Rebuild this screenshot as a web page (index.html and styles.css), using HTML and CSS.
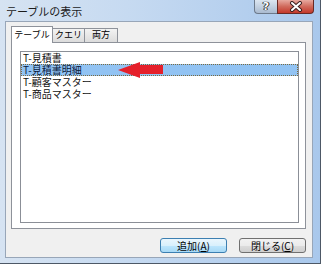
FILE: index.html
```html
<!DOCTYPE html>
<html lang="ja">
<head>
    <meta charset="UTF-8">
    <title>テーブルの表示</title>
    <link rel="stylesheet" href="styles.css">
</head>
<body>
    <div class="window">
        <div class="titlebar">
            <span class="title">テーブルの表示</span>
            <div class="caption">
                <span class="cap-btn help">?</span>
                <span class="cap-btn close">
                    <svg width="14" height="11" viewBox="0 0 14 11">
                        <path d="M3 2 L11 9 M11 2 L3 9" stroke="#3a2020" stroke-width="4" stroke-linecap="round"/>
                        <path d="M3 2 L11 9 M11 2 L3 9" stroke="#ffffff" stroke-width="2" stroke-linecap="round"/>
                    </svg>
                </span>
            </div>
        </div>
        <div class="client">
            <div class="tabs">
                <span class="tab active">テーブル</span>
                <span class="tab">クエリ</span>
                <span class="tab">両方</span>
            </div>
            <div class="panel">
                <ul class="list">
                    <li>T-見積書</li>
                    <li class="selected">T-見積書明細
                        <svg class="arrow" width="46" height="16" viewBox="0 0 46 16">
                            <polygon points="0,8 22,0 22,3 45,3 45,12 22,12 22,16" fill="#e5202b"/>
                        </svg>
                    </li>
                    <li>T-顧客マスター</li>
                    <li>T-商品マスター</li>
                </ul>
            </div>
            <div class="actions">
                <button class="btn default">追加(<u>A</u>)</button>
                <button class="btn">閉じる(<u>C</u>)</button>
            </div>
        </div>
    </div>
</body>
</html>
```

FILE: styles.css
```css
body {
    margin: 0;
    padding: 0;
    font-family: "Noto Sans CJK JP", "Liberation Sans", sans-serif;
    color: #000;
}
.window {
    width: 321px;
    height: 264px;
    box-sizing: border-box;
    padding: 0 7px 5px 5px;
    display: flex;
    flex-direction: column;
    background: linear-gradient(90deg, #d6e3f2 0%, #c6daf1 40%, #a9c8ec 100%);
    border-right: 1px solid #4d5866;
    border-bottom: 1px solid #4d5866;
}
.titlebar {
    height: 21px;
    display: flex;
    align-items: flex-start;
    flex-shrink: 0;
}
.title {
    font-size: 11px;
    line-height: 12px;
    margin: 5px 0 0 1px;
    color: #1b1b1b;
}
.caption {
    margin-left: auto;
    margin-right: -1px;
    display: flex;
}
.cap-btn {
    height: 14px;
    display: flex;
    align-items: center;
    justify-content: center;
    border: 1px solid #6d7a8b;
    border-top: none;
    box-sizing: border-box;
}
.help {
    width: 23px;
    border-radius: 0 0 0 4px;
    border-right: none;
    background: linear-gradient(#dce6f1, #aabbd0);
    color: #fff;
    font: bold 11px "DejaVu Sans", sans-serif;
    text-shadow: 0 0 1px #222, 0 0 1px #222, 1px 0 0 #333, -1px 0 0 #333;
}
.close {
    width: 37px;
    border-radius: 0 0 4px 0;
    background: linear-gradient(#e7a99f, #d06a5c 50%, #c4392b);
    border-color: #6a2a25;
}
.client {
    flex: 1;
    background: #f0f0f0;
    border: 1px solid #98a6b8;
    padding: 5px 6px 4px 5px;
    display: flex;
    flex-direction: column;
}
.tabs {
    display: flex;
    align-items: flex-end;
    height: 15px;
    position: relative;
    z-index: 1;
}
.tab {
    height: 14px;
    box-sizing: border-box;
    border: 1px solid #8e929a;
    border-bottom: none;
    border-left: none;
    background: linear-gradient(#f3f3f3, #dcdcdc);
    font-size: 9px;
    line-height: 12px;
    text-align: center;
    white-space: nowrap;
    padding: 0;
}
.tab:nth-child(2) {
    width: 32px;
}
.tab:nth-child(3) {
    width: 33px;
}
.tab.active {
    width: 42px;
    height: 17px;
    margin-bottom: -1px;
    background: #fff;
    border-left: 1px solid #8e929a;
    padding-top: 2px;
}
.panel {
    height: 187px;
    box-sizing: border-box;
    background: #fff;
    border: 1px solid #8e929a;
    padding: 8px 6px 5px 8px;
}
.list {
    list-style: none;
    margin: 0;
    padding: 0;
    height: 100%;
    box-sizing: border-box;
    border: 1px solid #8b8f97;
}
.list li {
    height: 12px;
    font-size: 10px;
    line-height: 12px;
    padding-left: 2px;
    color: #111;
    white-space: nowrap;
    position: relative;
}
.list li.selected {
    background: #92c3f3;
    outline: 1px dotted #7a6a40;
    outline-offset: -1px;
    color: #0a1a3c;
}
.arrow {
    position: absolute;
    left: 97px;
    top: -2px;
}
.actions {
    display: flex;
    justify-content: flex-end;
    gap: 12px;
    margin-top: 9px;
}
.btn {
    width: 67px;
    height: 15px;
    padding: 0;
    font-family: "Noto Sans CJK JP", sans-serif;
    font-size: 10px;
    line-height: 13px;
    border: 1px solid #707070;
    border-radius: 3px;
    background: linear-gradient(#f2f2f2 0%, #ebebeb 50%, #dddddd 51%, #cfcfcf 100%);
    color: #000;
}
.btn.default {
    border-color: #3c7fb1;
    background: linear-gradient(#eaf6fd 0%, #d9f0fc 50%, #bee6fd 51%, #a7d9f5 100%);
}
```
